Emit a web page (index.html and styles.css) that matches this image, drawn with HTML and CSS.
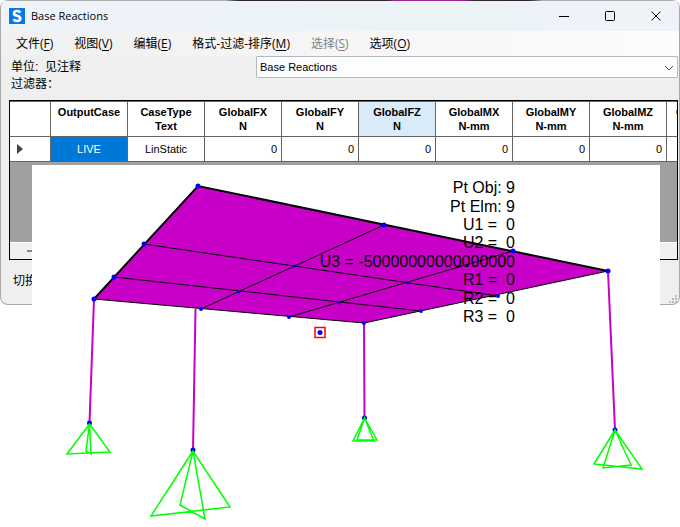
FILE: index.html
```html
<!DOCTYPE html>
<html lang="zh-CN">
<head>
<meta charset="utf-8">
<title>Base Reactions</title>
<link rel="stylesheet" href="styles.css">
</head>
<body>
<div class="window">
  <header class="titlebar">
    <svg class="logo" viewBox="0 0 16 16" aria-hidden="true">
      <rect width="16" height="16" fill="#0a78e4"/>
      <path d="M11.4 4.6C10.4 3.3 9.3 3 8 3C6.2 3 5 3.9 5 5.4C5 8.5 11.3 7.2 11.3 10.5C11.3 12 10 13 8 13C6.5 13 5.3 12.500 4.5 11.3" fill="none" stroke="#fff" stroke-width="2.6"/>
    </svg>
    <h1 class="title">Base Reactions</h1>
    <div class="controls">
      <button class="control" aria-label="最小化"><svg viewBox="0 0 12 12"><path d="M1 6.5H11"/></svg></button>
      <button class="control" aria-label="最大化"><svg viewBox="0 0 12 12"><rect x="1.5" y="1.5" width="9" height="9" rx="1"/></svg></button>
      <button class="control" aria-label="关闭"><svg viewBox="0 0 12 12"><path d="M1.5 1.5L10.5 10.5M10.5 1.5L1.5 10.5"/></svg></button>
    </div>
  </header>
  <nav class="menu">
    <button class="menu-item">文件(<u>F</u>)</button>
    <button class="menu-item">视图(<u>V</u>)</button>
    <button class="menu-item">编辑(<u>E</u>)</button>
    <button class="menu-item">格式-过滤-排序(<u>M</u>)</button>
    <button class="menu-item" disabled>选择(<u>S</u>)</button>
    <button class="menu-item">选项(<u>O</u>)</button>
  </nav>
  <section class="filters">
    <label class="labels" for="table-name"><span>单位:&nbsp; 见注释</span><span>过滤器：</span></label>
    <div class="picker">
      <select id="table-name"><option>Base Reactions</option></select>
      <svg class="chevron" viewBox="0 0 10 6" aria-hidden="true"><path d="M1 1L5 5L9 1"/></svg>
    </div>
  </section>
  <section class="sheet">
    <div class="rows">
      <table class="grid">
        <colgroup><col class="col-mark"><col><col><col><col><col><col><col><col><col></colgroup>
        <thead>
          <tr>
            <th></th>
            <th>OutputCase</th>
            <th>CaseType<br>Text</th>
            <th>GlobalFX<br>N</th>
            <th>GlobalFY<br>N</th>
            <th class="current">GlobalFZ<br>N</th>
            <th>GlobalMX<br>N-mm</th>
            <th>GlobalMY<br>N-mm</th>
            <th>GlobalMZ<br>N-mm</th>
            <th class="cut">GlobalX</th>
          </tr>
        </thead>
        <tbody>
          <tr>
            <td class="mark"><svg viewBox="0 0 6 10" aria-hidden="true"><path d="M0 0L6 5L0 10Z"/></svg></td>
            <td class="selected">LIVE</td>
            <td>LinStatic</td>
            <td class="number">0</td>
            <td class="number">0</td>
            <td class="number">0</td>
            <td class="number">0</td>
            <td class="number">0</td>
            <td class="number">0</td>
            <td class="number"></td>
          </tr>
        </tbody>
      </table>
    </div>
    <div class="scroller"><span class="thumb"></span></div>
  </section>
  <footer class="footer">
    <span>切换</span>
    <svg class="grip" viewBox="0 0 8 8" aria-hidden="true"><path d="M6 0h2v2h-2zM3 3h2v2h-2zM6 3h2v2h-2zM0 6h2v2h-2zM3 6h2v2h-2zM6 6h2v2h-2z"/></svg>
  </footer>
</div>
<svg class="model" viewBox="32 165 628 362" role="img" aria-label="Pt Obj: 9">
  <rect x="32" y="165" width="628" height="362" fill="#fff"/>
  <path class="slab" d="M198 186L608 271L364 323L94 299Z"/>
  <g class="mesh">
    <path d="M144 244L498 296M114 277L421 311M384 225L201 309M513 251L289 317M94 299L364 323L608 271"/>
    <path class="edge" d="M94 299L198 186L608 271"/>
  </g>
  <path class="column" d="M94 299L89.500 423M195.500 309L193 450M364 323L364.500 418M608 271L615 430"/>
  <g class="joints">
    <circle cx="198" cy="186" r="2.5"/><circle cx="144" cy="244" r="2.5"/><circle cx="114" cy="277" r="2.5"/><circle cx="94" cy="299" r="2.5"/>
    <circle cx="384" cy="225" r="2.5"/><circle cx="513" cy="251" r="2.5"/><circle cx="608" cy="271" r="2.5"/>
    <circle cx="201" cy="309" r="2"/><circle cx="289" cy="317" r="2"/><circle cx="364" cy="323" r="2"/><circle cx="421" cy="311" r="2"/><circle cx="498" cy="296" r="2"/>
    <circle cx="295" cy="266" r="1.5"/><circle cx="239" cy="292" r="1.5"/><circle cx="339" cy="303" r="1.5"/><circle cx="408" cy="283" r="1.5"/>
    <circle cx="89.5" cy="423" r="2.5"/><circle cx="193" cy="450" r="2.5"/><circle cx="364.5" cy="418" r="2.5"/><circle cx="615" cy="430" r="2.5"/>
    <circle cx="320" cy="332.5" r="2.5"/>
  </g>
  <rect class="picked" x="315" y="327.5" width="10" height="10"/>
  <g class="supports">
    <path d="M89.5 424L67 454L110 452ZM89.5 424L86 451L91 454Z"/>
    <path d="M193 451L151 516L230 507ZM193 451L180 505L205 519Z"/>
    <path d="M364.5 418L353 441L374 441ZM364.5 418L357 440L377 440Z"/>
    <path d="M615 430L594 464L642 469ZM615 430L603 468L631 465Z"/>
  </g>
  <g class="readout">
    <text x="515" y="193">Pt Obj: 9</text>
    <text x="515" y="212">Pt Elm: 9</text>
    <text x="515" y="230">U1 =&#160; 0</text>
    <text x="515" y="248">U2 =&#160; 0</text>
    <text x="515" y="267">U3 = -50000000000000000</text>
    <text x="515" y="285">R1 =&#160; 0</text>
    <text x="515" y="304">R2 =&#160; 0</text>
    <text x="515" y="322">R3 =&#160; 0</text>
  </g>
</svg>
</body>
</html>
```
FILE: styles.css
```css
* {
  box-sizing: border-box;
}

body {
  display: grid;
  grid-template-columns: minmax(0, 1fr);
  align-items: start;
  margin: 0;
  background: #fff;
  color: #000;
  font: 12px/17px "Liberation Sans", "Noto Sans CJK SC", sans-serif;
}

/* The model view lies over the window: both share one grid cell. */
.window,
.model {
  grid-area: 1 / 1;
}

button {
  padding: 0;
  border: 0;
  background: none;
  color: inherit;
  font: inherit;
}

.window {
  border: 1px solid #a8a8a8;
  border-top: 0;
  border-radius: 8px;
  background: #efefef;
  overflow: hidden;
}

.titlebar {
  display: flex;
  align-items: center;
  height: 31px;
  padding: 1px 0 0 8px;
  background:
    linear-gradient(90deg, #b0b0b0 33%, #302830 35%, #302830 57%, #98289a 58%, #98289a 68%, #302830 70%, #302830 78%, #b0b0b0 80%) 0 0 / 100% 1px no-repeat,
    linear-gradient(90deg, #eff3fb, #ebf3f7 60%, #eff3f9);
}

.logo {
  width: 16px;
  height: 16px;
}

.title {
  flex: 1;
  margin: 0 0 0 6px;
  font: 11px/16px "Open Sans", "Noto Sans", sans-serif;
}

.controls {
  display: flex;
}

.control {
  display: grid;
  place-items: center;
  width: 46px;
  height: 28px;
}

.control svg {
  width: 12px;
  height: 12px;
  fill: none;
  stroke: #000;
}

.menu {
  display: flex;
  gap: 21px;
  height: 25px;
  padding-left: 15px;
  background: linear-gradient(90deg, #f0f0f0, #fcfcfc);
  font-family: "Open Sans", "Noto Sans CJK SC", sans-serif;
}

.menu-item {
  white-space: nowrap;
}

.menu-item u {
  text-underline-offset: 2px;
}

.menu-item:disabled {
  color: #808080;
}

.filters {
  display: flex;
  height: 44px;
}

.labels {
  display: flex;
  flex-direction: column;
  flex: none;
  width: 255px;
  padding: 3px 0 0 10px;
}

.picker {
  position: relative;
  flex: 1;
  height: 22px;
  margin-right: 1px;
}

.picker select {
  width: 100%;
  height: 22px;
  padding: 0 3px;
  border: 1px solid #b5bac0;
  border-radius: 1px;
  background: #fcfdfe;
  color: #000;
  font: 11px/16px "Liberation Sans", sans-serif;
  appearance: none;
}

.chevron {
  position: absolute;
  top: 9px;
  right: 4px;
  width: 10px;
  height: 6px;
  fill: none;
  stroke: #555;
  pointer-events: none;
}

.sheet {
  margin: 0 1px 0 8px;
  border: 1px solid #000;
  background: #a0a0a0;
}

.rows {
  height: 141px;
  overflow: hidden;
}

.grid {
  width: 734px;
  table-layout: fixed;
  border-collapse: separate;
  border-spacing: 0;
  background: #fff;
  font-size: 11px;
  line-height: 14px;
}

.col-mark {
  width: 41px;
}

.grid th,
.grid td {
  padding: 0;
  border-right: 1px solid #646464;
  border-bottom: 1px solid #646464;
  text-align: center;
}

.grid th {
  height: 36px;
  padding-top: 3px;
  border-top: 1px solid #646464;
  vertical-align: top;
}

.grid td {
  height: 25px;
}

.grid .current {
  background: #d9ebf9;
}

.grid .cut {
  padding-left: 9px;
  text-align: left;
}

.grid .selected {
  background: #0078d7;
  color: #fff;
}

.grid .number {
  padding-right: 4px;
  text-align: right;
}

.grid .mark {
  padding-left: 7px;
  text-align: left;
}

.mark svg {
  display: block;
  width: 6px;
  height: 10px;
  fill: #444;
}

.scroller {
  height: 17px;
  padding: 7px 17px;
  border-top: 1px solid #fff;
  background: #f0f0f0;
}

.thumb {
  display: block;
  width: 60px;
  height: 2px;
  background: #858585;
}

.footer {
  display: flex;
  justify-content: space-between;
  align-items: flex-end;
  height: 44px;
  padding: 0 2px 1px 12px;
}

.footer span {
  align-self: center;
}

.grip {
  width: 8px;
  height: 8px;
  fill: #bdbdbd;
}

.model {
  z-index: 1;
  width: calc(100% - 52px);
  margin: 165px 20px 0 32px;
}

.slab {
  fill: #c800c8;
}

.mesh {
  fill: none;
  stroke: #000;
}

.mesh .edge {
  stroke-width: 2;
}

.column {
  fill: none;
  stroke: #c800c8;
  stroke-width: 2;
}

.joints {
  fill: #00f;
}

.picked {
  fill: none;
  stroke: #f00;
  stroke-width: 1.5;
}

.supports {
  fill: none;
  stroke: #0f0;
  stroke-width: 1.5;
}

.readout {
  font: 16px "Liberation Sans", sans-serif;
  text-anchor: end;
}
```
